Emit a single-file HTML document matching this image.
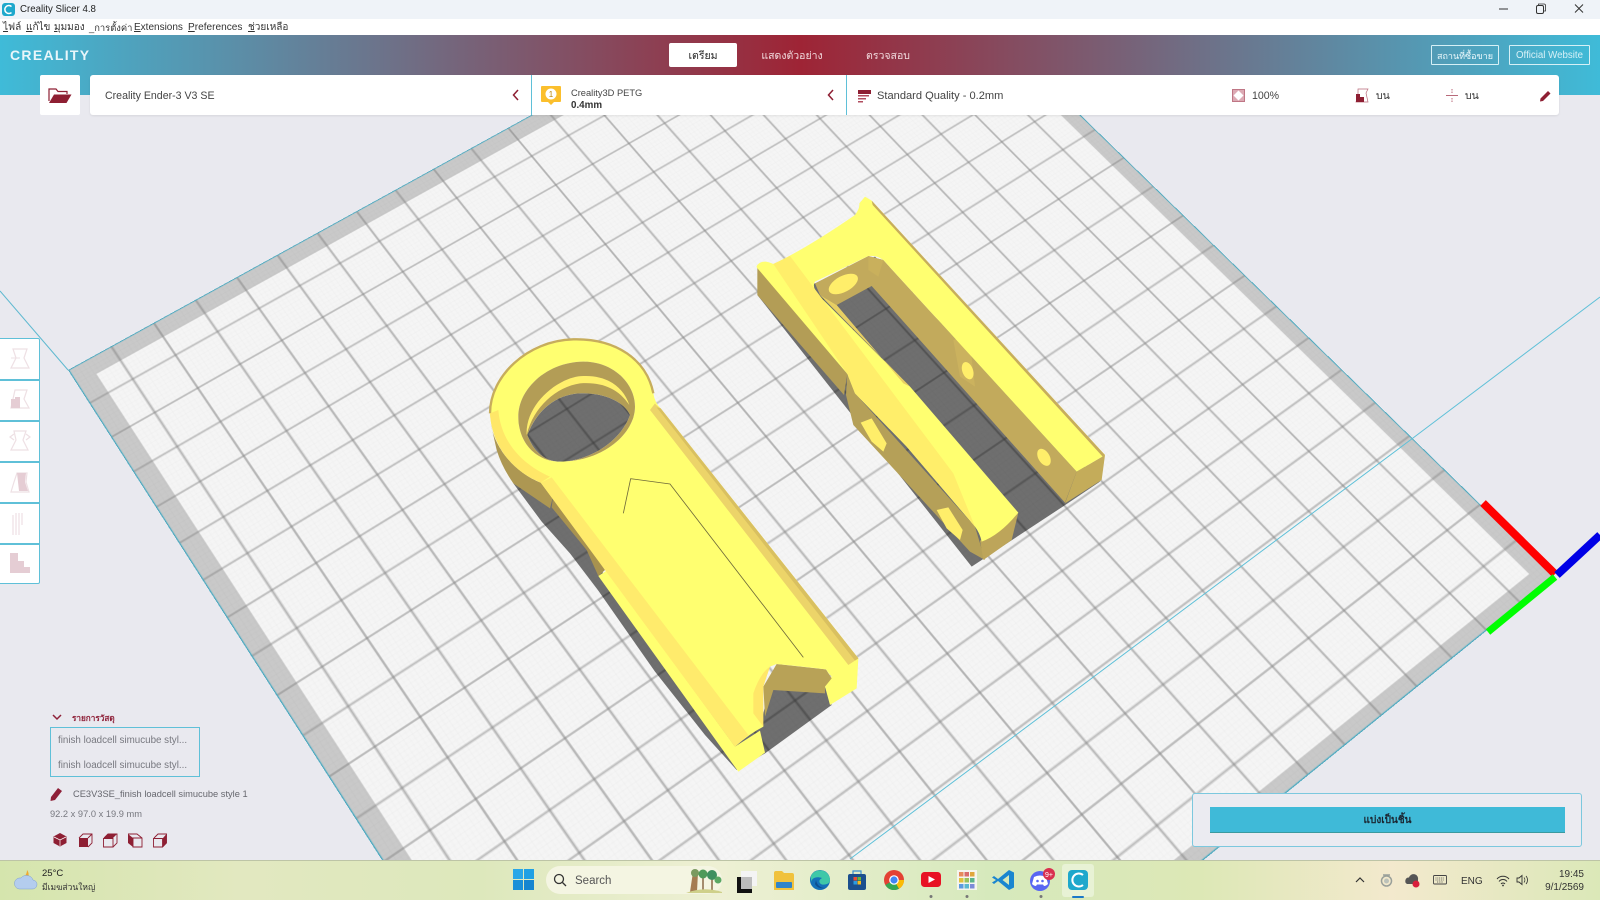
<!DOCTYPE html>
<html><head><meta charset="utf-8"><title>Creality Slicer 4.8</title>
<style>
html,body{margin:0;padding:0;width:1600px;height:900px;overflow:hidden;background:#e9e9ef}
body{position:relative;font-family:"Liberation Sans","Noto Sans CJK SC",sans-serif;color:#333}
.a{position:absolute}
.t{position:absolute;white-space:nowrap;line-height:14px}
#view{position:absolute;left:0;top:0;width:1600px;height:860px;overflow:hidden;background:#e9e9ef;contain:paint}
#plate{position:absolute;left:0;top:0;width:1000px;height:1000px;transform-origin:0 0;
transform:matrix3d(.9699,-.46195,0,.00017655,.4492,.6432,0,-.00021958,0,0,1,0,68,370,0,1)}
u{text-decoration:underline}
</style></head><body>
<div id="view">
<div id="plate"><svg width="1000" height="1000" viewBox="0 0 1000 1000" style="display:block">
<defs>
<pattern id="f" width="4.5454" height="4.5454" patternUnits="userSpaceOnUse"><path d="M0 0H4.5454M0 0V4.5454" stroke="#000" stroke-opacity=".035" stroke-width=".9" fill="none"/></pattern>
<pattern id="m" width="45.4545" height="45.4545" patternUnits="userSpaceOnUse" patternTransform="translate(-22.727,-22.727)"><path d="M22.727 0V45.4545M0 22.727H45.4545" stroke="#868686" stroke-width="1.150" fill="none"/></pattern>
</defs>
<rect width="1000" height="1000" fill="#c9c9c9"/>
<rect x="20" y="20" width="963" height="965" fill="#f5f5f5"/>
<rect width="1000" height="1000" fill="url(#f)"/>
<rect width="1000" height="1000" fill="url(#m)"/>
<rect x=".5" y=".5" width="999" height="999" fill="none" stroke="#4aa9c0" stroke-width="1.200"/>
</svg></div>
<svg class="a" style="left:0;top:0;display:block" width="1600" height="860" viewBox="0 0 1600 860">
<path d="M0 291L68 370" stroke="#5fb9d0" stroke-width="1" fill="none"/>
<path d="M1600 297L1413 438L850 859" stroke="#5fc0d8" stroke-width="1" fill="none"/>

<!-- model 1 -->
<g transform="translate(470,320) scale(.33333)">
<path d="M130 490L215 605L300 700L385 812L555 1055L705 1245L800 1350L885 1300L1085 1155L1065 1100L900 1100L870 1220L400 760L240 520Z" fill="#000" fill-opacity=".55"/>
<path d="M172 345C200 270 260 222 330 220C410 218 465 250 480 285C450 370 350 425 270 425C225 425 190 395 172 345Z" fill="#000" fill-opacity=".55"/>
<path d="M62 310C75 390 140 460 212 488L250 525L240 565L130 490Q95 440 80 390Z" fill="#ad9752"/>
<path d="M210 488L360 680L405 750L385 768L350 690L245 562L250 525Z" fill="#a8924f"/>
<path d="M385 768L410 752L795 1280L870 1232L885 1298L805 1355Z" fill="#ffff70"/>
<path d="M1085 1070L1165 1015L1160 1105L1080 1155L1065 1100Z" fill="#ffff70"/>
<path d="M880 1100L920 1032L1068 1048L1085 1075L1065 1100L1065 1120L910 1110L885 1190Z" fill="#b8a257"/>
<path fill-rule="evenodd" fill="#ffff70" d="M212 488C120 450 65 370 60 280C60 170 170 62 310 58C440 55 530 120 550 220Q555 250 572 265L1165 1015Q1120 1050 1085 1070Q1075 1060 1068 1048Q1000 1040 920 1032L900 1040Q880 1090 872 1130L880 1220Q840 1240 795 1280L410 752Z
M145 290C145 200 240 125 340 125C430 125 495 190 495 260C495 340 400 425 270 425C200 425 145 370 145 290Z"/>
<path fill-rule="evenodd" fill="#b39d56" d="M145 290C145 200 240 125 340 125C430 125 495 190 495 260C495 340 400 425 270 425C200 425 145 370 145 290Z
M172 345C200 270 260 222 330 220C410 218 465 250 480 285C450 370 350 425 270 425C225 425 190 395 172 345Z"/>
<path d="M170 345C165 250 270 168 340 168C410 165 460 200 478 255C445 205 395 185 330 190C260 200 190 260 170 345Z" fill="#fff06c"/>
<path d="M60 280C60 170 170 62 310 58C440 55 530 120 550 220" fill="none" stroke="#c7ad5c" stroke-width="7"/>
<path d="M212 488C120 450 65 370 60 280L85 270C92 360 150 430 240 470Z" fill="#ffe768"/>
<path d="M555 250Q560 258 572 265L1165 1015L1135 1035L540 270Z" fill="#ecd469"/>
<path d="M572 265L1165 1015L1155 1022L560 262Z" fill="#d9c060"/>
<path d="M212 488L245 472L835 1245L795 1280Z" fill="#ffeb6c"/>
<path d="M460 580L482 476L600 492L1000 1012" fill="none" stroke="#6f6a3a" stroke-width="2.500"/>
<path d="M850 1120Q870 1060 900 1040L880 1100L880 1220L850 1180Z" fill="#ffe768"/>
</g>

<!-- model 2 -->
<g transform="translate(740,180) scale(.33333)">
<path d="M52 345L695 1160L965 982L1080 905L405 230L225 310Z" fill="#000" fill-opacity=".55"/>
<path d="M52 262L52 345L312 645L322 582Z" fill="#b39d56"/>
<path d="M322 582L345 640L705 1040L735 1140L690 1115L340 735L318 645Z" fill="#b5a058"/>
<path d="M835 998L815 1080L730 1140L720 1082Q780 1065 835 998Z" fill="#bda55a"/>
<path d="M1095 825L1085 900L975 970L1010 875Z" fill="#c4ac5a"/>
<path d="M385 228L430 240L1010 875L975 968L395 318L290 375L240 345L225 310Z" fill="#c2aa5c"/>
<path d="M640 480Q665 470 690 490L705 620L660 590Z" fill="#cbb25e"/>
<path d="M50 258Q65 235 100 252Q200 205 345 105Q360 85 358 70L375 50L395 62L1095 825L1010 875L640 470L430 240Q410 225 385 228L225 305Q215 320 235 345L420 530L510 620L835 998Q780 1065 725 1085Q720 1060 705 1040L500 800L345 640L322 582L50 262Z" fill="#ffff70"/>
<path d="M100 252L150 228L640 880L705 1040L500 800L345 640L322 582Z" fill="#ffee6a"/>
<path d="M240 345L290 375L490 610L510 620Z" fill="#e8cf62"/>
<path d="M395 62L1095 825L1088 830L398 75Z" fill="#c7ad5c"/>
<path d="M385 228L430 240L415 290L385 270Z" fill="#c9b05c"/>
<ellipse cx="310" cy="312" rx="48" ry="24" transform="rotate(-28 310 312)" fill="#ffee6a"/>
<ellipse cx="683" cy="572" rx="16" ry="27" transform="rotate(-20 683 572)" fill="#ffee6a"/>
<ellipse cx="912" cy="832" rx="17" ry="28" transform="rotate(-30 912 832)" fill="#ffee6a"/>
<path d="M362 728L395 715L440 790L430 815L395 785Z" fill="#ffee6a"/>
<path d="M590 990L625 982L668 1050L660 1080L620 1045Z" fill="#ffee6a"/>
</g>

<!-- axes -->
<path d="M1483 503L1555 574" stroke="#ff0000" stroke-width="8"/>
<path d="M1488 632L1555 577" stroke="#00ff00" stroke-width="7"/>
<path d="M1557 575L1600 535" stroke="#0000e6" stroke-width="8"/>
</svg>
</div>

<!-- title bar -->
<div class="a" style="left:0;top:0;width:1600px;height:19px;background:#eff3f8"></div>
<div class="a" style="left:0;top:19px;width:1600px;height:16px;background:#fff"></div>
<div class="t" style="left:20px;top:3px;font-size:9.7px;color:#222">Creality Slicer 4.8</div>
<div class="t" style="left:3px;top:21px;font-size:10px"><u>ไ</u>ฟล์</div>
<div class="t" style="left:26px;top:21px;font-size:10px"><u>แ</u>ก้ไข</div>
<div class="t" style="left:54px;top:21px;font-size:10px"><u>ม</u>ุมมอง</div>
<div class="t" style="left:89px;top:21px;font-size:9.4px">_การตั้งค่า</div>
<div class="t" style="left:134px;top:21px;font-size:10px"><u>E</u>xtensions</div>
<div class="t" style="left:188px;top:21px;font-size:10.1px"><u>P</u>references</div>
<div class="t" style="left:248px;top:21px;font-size:10px"><u>ช</u>่วยเหลือ</div>

<!-- header -->
<div class="a" style="left:0;top:35px;width:1600px;height:60px;background:linear-gradient(90deg,#3fbbd8 0%,#9e2435 50%,#3fbbd8 100%)"></div>
<div class="t" style="left:10px;top:48px;font-size:14px;font-weight:bold;color:#e8f6fa;letter-spacing:1.3px">CREALITY</div>
<div class="a" style="left:669px;top:43px;width:68px;height:24px;background:#fff;border-radius:2px"></div>
<div class="t" style="left:669px;top:49px;width:68px;text-align:center;font-size:10.5px;color:#222">เตรียม</div>
<div class="t" style="left:742px;top:49px;width:100px;text-align:center;font-size:10.5px;color:#f3dde0">แสดงตัวอย่าง</div>
<div class="t" style="left:848px;top:49px;width:80px;text-align:center;font-size:10.5px;color:#f3dde0">ตรวจสอบ</div>
<div class="a" style="left:1431px;top:45px;width:66px;height:18px;border:1px solid #d6f0f6;border-radius:1px"></div>
<div class="t" style="left:1431px;top:49px;width:68px;text-align:center;font-size:9px;color:#eefafd">สถานที่ซื้อขาย</div>
<div class="a" style="left:1509px;top:45px;width:79px;height:18px;border:1px solid #d6f0f6;border-radius:1px"></div>
<div class="t" style="left:1509px;top:49px;width:81px;text-align:center;font-size:9.7px;color:#d8f1f7">Official Website</div>

<!-- toolbar -->
<div class="a" style="left:40px;top:75px;width:40px;height:40px;background:#fff;border-radius:2px"></div>
<div class="a" style="left:90px;top:75px;width:1469px;height:40px;background:#fff;border-radius:3px;box-shadow:0 1px 2px rgba(0,0,0,.08)"></div>
<div class="a" style="left:531px;top:75px;width:1px;height:40px;background:#5fc0d8"></div>
<div class="a" style="left:846px;top:75px;width:1px;height:40px;background:#5fc0d8"></div>
<div class="t" style="left:105px;top:89px;font-size:10.6px;color:#444">Creality Ender-3 V3 SE</div>
<div class="t" style="left:571px;top:85.500px;font-size:9.3px;color:#444">Creality3D PETG</div>
<div class="t" style="left:571px;top:98.500px;font-size:9.8px;font-weight:bold;color:#333">0.4mm</div>
<div class="t" style="left:877px;top:89px;font-size:11.1px;color:#444">Standard Quality - 0.2mm</div>
<div class="t" style="left:1252px;top:89px;font-size:10.6px;color:#444">100%</div>
<div class="t" style="left:1376px;top:89px;font-size:10.5px;color:#333">บน</div>
<div class="t" style="left:1465px;top:89px;font-size:10.5px;color:#333">บน</div>

<!-- left tools -->
<div class="a" style="left:0;top:338px;width:40px;height:246px;box-sizing:border-box;background:#fff;border:1.500px solid #5fc0d8;border-left:0;border-radius:0 2px 2px 0"></div>
<div class="a" style="left:0;top:379px;width:40px;height:1.500px;background:#5fc0d8"></div>
<div class="a" style="left:0;top:420px;width:40px;height:1.500px;background:#5fc0d8"></div>
<div class="a" style="left:0;top:461px;width:40px;height:1.500px;background:#5fc0d8"></div>
<div class="a" style="left:0;top:502px;width:40px;height:1.500px;background:#5fc0d8"></div>
<div class="a" style="left:0;top:543px;width:40px;height:1.500px;background:#5fc0d8"></div>

<!-- bottom left -->
<div class="t" style="left:72px;top:712px;font-size:8.2px;font-weight:bold;color:#8e2038">รายการวัสดุ</div>
<div class="a" style="left:50px;top:727px;width:148px;height:48px;border:1.500px solid #5fc0d8"></div>
<div class="t" style="left:58px;top:734px;font-size:9.8px;color:#77787f">finish loadcell simucube styl...</div>
<div class="t" style="left:58px;top:759px;font-size:9.8px;color:#77787f">finish loadcell simucube styl...</div>
<div class="t" style="left:73px;top:786.500px;font-size:9.3px;color:#66676e">CE3V3SE_finish loadcell simucube style 1</div>
<div class="t" style="left:50px;top:807px;font-size:9.3px;color:#77787f">92.2 x 97.0 x 19.9 mm</div>

<!-- slice -->
<div class="a" style="left:1192px;top:793px;width:388px;height:52px;background:#ebebf1;border:1.500px solid #7cc8de;border-radius:3px"></div>
<div class="a" style="left:1210px;top:807px;width:355px;height:25px;background:#3fbad8;border-bottom:1px solid #3b9a9f"></div>
<div class="t" style="left:1210px;top:814px;width:355px;text-align:center;font-size:10px;font-weight:bold;color:#1a2530">แบ่งเป็นชิ้น</div>

<!-- taskbar -->
<div class="a" style="left:0;top:860px;width:1600px;height:40px;background:linear-gradient(90deg,#d5e5ad 0%,#e2e8c0 15%,#dde8bc 30%,#eef0d4 45%,#d6e9bc 62%,#dde8b6 75%,#f3e9cd 87%,#dbe8b8 100%);border-top:1px solid #bdc4a6;box-sizing:border-box"></div>
<div class="t" style="left:42px;top:867px;font-size:9.5px;color:#222">25°C</div>
<div class="t" style="left:42px;top:880px;font-size:8.5px;color:#333">มีเมฆส่วนใหญ่</div>
<div class="a" style="left:546px;top:866px;width:176px;height:28px;border-radius:14px;background:#f4f5e2"></div>
<div class="t" style="left:575px;top:874px;font-size:11.5px;color:#555">Search</div>
<div class="t" style="left:1461px;top:875px;font-size:10px;color:#333">ENG</div>
<div class="t" style="left:1540px;top:868px;width:44px;text-align:right;font-size:10px;color:#333">19:45</div>
<div class="t" style="left:1524px;top:881px;width:60px;text-align:right;font-size:10px;color:#333">9/1/2569</div>

<!-- icons -->
<svg class="a" style="left:0;top:0;display:block" width="1600" height="900" viewBox="0 0 1600 900">
<rect x="2" y="3" width="13" height="13" rx="3" fill="#1ea8cc"/>
<path d="M11.500 6.500A4 4 0 1 0 11.500 12.500" fill="none" stroke="#fff" stroke-width="1.500"/>
<path d="M1499 9H1508" stroke="#333"/>
<rect x="1536.500" y="5.500" width="7" height="8" rx="1.500" fill="none" stroke="#333"/>
<path d="M1538.500 5V4H1544Q1545.500 4 1545.500 5.500V11H1544" fill="none" stroke="#333" stroke-width=".8"/>
<path d="M1575 4.500L1583 12.500M1583 4.500L1575 12.500" stroke="#333"/>
<!-- folder -->
<path d="M49 101V89H56L58 91.500H67V94" fill="none" stroke="#8e1f33" stroke-width="1.200"/>
<path d="M54 94.500H71.500L66.500 103H49Z" fill="#8e1f33"/>
<path d="M518 90L513.500 95L518 100M833 90L828.500 95L833 100" fill="none" stroke="#8e1f33" stroke-width="1.500"/>
<!-- material -->
<path d="M541 87Q541 86 542 86H560Q561 86 561 87V101Q561 102 560 102H554L551 105L548 102H542Q541 102 541 101Z" fill="#fbbf2d"/>
<circle cx="551" cy="94" r="5.500" fill="#fff"/>
<text x="551" y="97" text-anchor="middle" font-size="8" fill="#b8860b" font-family="Liberation Sans">1</text>
<!-- quality -->
<rect x="858" y="90" width="13" height="4" fill="#8e1f33"/>
<rect x="858" y="95" width="11" height="1.500" fill="#b04d5f"/>
<rect x="858" y="98" width="8" height="1.500" fill="#b04d5f"/>
<rect x="858" y="101" width="5" height="1.500" fill="#b04d5f"/>
<!-- infill -->
<rect x="1232" y="89" width="13" height="13" fill="#dcaab4"/>
<path d="M1238.500 90.500L1243.500 95.500L1238.500 100.500L1233.500 95.500Z" fill="#fff"/>
<rect x="1232.500" y="89.500" width="12" height="12" fill="none" stroke="#b86a7a" stroke-width=".8"/>
<!-- support -->
<path d="M1358 89H1368L1366 93L1368 102H1356L1358 95Z" fill="none" stroke="#b86a7a" stroke-width=".7"/>
<path d="M1356 94H1360V97H1364V102H1356Z" fill="#8e1f33"/>
<!-- adhesion -->
<path d="M1446 95.500H1458" stroke="#b86a7a"/>
<path d="M1452 89V93M1452 98V102" stroke="#b86a7a" stroke-dasharray="1.500 1"/>
<!-- pencil -->
<path d="M1540.500 98.500L1548 91L1550.500 93.500L1543 101L1540 101.500Z" fill="#8e1f33"/>

<!-- left tool icons -->
<g fill="none" stroke="#eee0e4" stroke-width="1.200">
<path d="M13 349H27L24 358L29 368H11L16 358Z"/>
<path d="M11 358H20" stroke-width="1"/>
<path d="M15 390H27L24 399L29 408H11Z"/>
<path d="M14 431H26L23 440L28 450H11L16 440Z"/>
<path d="M14 434L10 437L14 440M26 434L30 437L26 440"/>
<path d="M17 473H27L26 482L29 492H11L14 482Z"/>
<path d="M13 515V535M16 513V535M19 513V535M22 513V525"/>
</g>
<path d="M11 408V399H15V397H20V408Z" fill="#e5cdd4"/>
<path d="M17 473H26L25 482L28 491H19Z" fill="#e5cdd4"/>
<path d="M10 553H18V561H24V567H30V573H10Z" fill="#e5cdd4"/>

<!-- bottom left icons -->
<path d="M53 715L57 719L61 715" fill="none" stroke="#8e2038" stroke-width="1.500"/>
<path d="M51 797L58 788L62 791L55 800L50.500 801Z" fill="#8e2038"/>
<path d="M60 833L66.500 836.500V843L60 846.500L53.500 843V836.500Z" fill="#8e1f33"/>
<path d="M54 837L60 840L66 837M60 840V846" stroke="#fff" stroke-width=".7" fill="none"/>
<rect x="79" y="838" width="9" height="9" fill="#8e1f33"/>
<path d="M79 838L83 834H92V843L88 847M88 838L92 834" fill="none" stroke="#8e1f33" stroke-width=".9"/>
<path d="M103.500 838.500H113V847H103.500ZM104 838L108 834H117V843L113 847" fill="none" stroke="#8e1f33" stroke-width=".9"/>
<path d="M113 838L117 834H108L104 838Z" fill="#8e1f33"/>
<path d="M128 834L133 838V847L128 843Z" fill="#8e1f33"/>
<path d="M128 834H137L142 838V847H133V838H142" fill="none" stroke="#8e1f33" stroke-width=".9"/>
<path d="M153.500 838.500H162.500V847H153.500ZM154 838L158 834H166.500V843L162.500 847" fill="none" stroke="#8e1f33" stroke-width=".9"/>
<path d="M163 838L166.500 834V843L163 847Z" fill="#8e1f33"/>

<!-- weather -->
<path d="M16 879A7 7 0 0 0 27 870A9 9 0 0 1 16 879Z" fill="#f0a830"/>
<path d="M19 889H32A4.500 4.500 0 0 0 33 880A7 7 0 0 0 21 878A5.500 5.500 0 0 0 19 889Z" fill="#b4cdee" stroke="#7f9fd0" stroke-width=".5"/>

<!-- start -->
<rect x="513" y="869" width="10" height="10" fill="#29a7e8"/>
<rect x="524" y="869" width="10" height="10" fill="#1fa0e4"/>
<rect x="513" y="880" width="10" height="10" fill="#1a8fd8"/>
<rect x="524" y="880" width="10" height="10" fill="#1585d0"/>
<!-- search -->
<circle cx="559" cy="879" r="4.500" fill="none" stroke="#333" stroke-width="1.300"/>
<path d="M562.500 882.500L566 886" stroke="#333" stroke-width="1.300"/>
<path d="M690 892L693 872H698L697 892Z" fill="#a57c52"/>
<path d="M703 874V892M712 874V892" stroke="#8a6a48" stroke-width="1.500"/>
<circle cx="695" cy="873" r="4" fill="#7a9a60"/>
<circle cx="703" cy="874" r="4.500" fill="#4f9a5a"/>
<circle cx="712" cy="875" r="5" fill="#3f9060"/>
<circle cx="718" cy="880" r="3.500" fill="#5aa864"/>
<path d="M686 893Q704 886 722 892V893Z" fill="#cfd08a"/>
<!-- notes -->
<rect x="741" y="871" width="16" height="15" fill="#f4f4f4"/>
<rect x="737" y="877" width="15" height="16" fill="#111"/>
<rect x="741" y="877" width="11" height="12" fill="#bdbdbd"/>
<!-- explorer -->
<path d="M774 873Q774 871 776 871H782L784 873H792Q794 873 794 875V890H774Z" fill="#f0c23c"/>
<rect x="776" y="882" width="16" height="6" rx="1" fill="#2f84c8"/>
<!-- edge -->
<circle cx="820" cy="880" r="10" fill="#1570b8"/>
<path d="M811 876A10 10 0 0 1 830 880C830 884 825 885 822 884.500C819 883.500 818 880 822 878C816 876 812 878 811 882Z" fill="#3fc8a8"/>
<path d="M815 884C817 888 822 889 825 888C820 888 817 885 816 880Z" fill="#0f4f90"/>
<!-- store -->
<rect x="848" y="874" width="18" height="16" rx="2" fill="#1b4f8e"/>
<path d="M853 874V871H861V874" fill="none" stroke="#3a90d0" stroke-width="1.200"/>
<rect x="853.500" y="877" width="3.500" height="3.500" fill="#e94f35"/>
<rect x="857.500" y="877" width="3.500" height="3.500" fill="#6bb73a"/>
<rect x="853.500" y="881" width="3.500" height="3.500" fill="#2c9be0"/>
<rect x="857.500" y="881" width="3.500" height="3.500" fill="#f8b91d"/>
<!-- chrome -->
<circle cx="894" cy="880" r="10" fill="#e34133"/>
<path d="M894 880L885.300 885A10 10 0 0 0 899 888.700Z" fill="#35a853"/>
<path d="M894 880H904A10 10 0 0 1 899 888.700Z" fill="#fbbc05"/>
<circle cx="894" cy="880" r="4.800" fill="#fff"/>
<circle cx="894" cy="880" r="3.600" fill="#4285f4"/>
<!-- youtube -->
<rect x="921" y="872" width="20" height="15" rx="3.500" fill="#e81224"/>
<path d="M928.500 876L935 879.500L928.500 883Z" fill="#fff"/>
<circle cx="931" cy="896.500" r="1.500" fill="#777"/>
<!-- grid app -->
<rect x="957" y="870" width="20" height="20" fill="#f5f5ee"/>
<g>
<rect x="959" y="872" width="4.500" height="4.500" fill="#e68a5c"/><rect x="964.500" y="872" width="4.500" height="4.500" fill="#d86c6c"/><rect x="970" y="872" width="4.500" height="4.500" fill="#e0a63c"/>
<rect x="959" y="878" width="4.500" height="4.500" fill="#e0c23c"/><rect x="964.500" y="878" width="4.500" height="4.500" fill="#9ac25c"/><rect x="970" y="878" width="4.500" height="4.500" fill="#5cb48a"/>
<rect x="959" y="884" width="4.500" height="4.500" fill="#5c9ae0"/><rect x="964.500" y="884" width="4.500" height="4.500" fill="#5cb8d0"/><rect x="970" y="884" width="4.500" height="4.500" fill="#7c8ad8"/>
</g>
<circle cx="967" cy="896.500" r="1.500" fill="#777"/>
<!-- vscode -->
<path d="M1009 870L1014 872.500V887.500L1009 890L998 881L994 884L992 882.500L996 880L992 877.500L994 876L998 879ZM1009 875L1002.500 880L1009 885Z" fill="#1a86d0" fill-rule="evenodd"/>
<!-- discord -->
<circle cx="1040" cy="881" r="10" fill="#5865f2"/>
<path d="M1034 877Q1040 874 1046 877L1048 884Q1046 886 1044 886L1043 884.500H1037L1036 886Q1034 886 1032 884Z" fill="#fff"/>
<circle cx="1037.500" cy="881" r="1.300" fill="#5865f2"/><circle cx="1042.500" cy="881" r="1.300" fill="#5865f2"/>
<circle cx="1049" cy="874" r="6" fill="#d9304f"/>
<text x="1049" y="877" text-anchor="middle" font-size="7" fill="#fff" font-family="Liberation Sans">9+</text>
<circle cx="1041" cy="896.500" r="1.500" fill="#777"/>
<!-- creality -->
<rect x="1062" y="864" width="32" height="33" rx="3" fill="#fff" fill-opacity=".4"/>
<rect x="1068" y="870" width="20" height="20" rx="4" fill="#1ea8cc"/>
<path d="M1083 875A6.500 6.500 0 1 0 1083 885" fill="none" stroke="#fff" stroke-width="2"/>
<rect x="1072" y="896" width="12" height="2" rx="1" fill="#1a78c8"/>
<!-- tray -->
<path d="M1356 882L1360 878L1364 882" fill="none" stroke="#333" stroke-width="1.200"/>
<circle cx="1386.500" cy="881" r="5" fill="none" stroke="#9aa09a" stroke-width="1.500"/>
<circle cx="1386.500" cy="881" r="2.500" fill="#bcc2ba"/>
<path d="M1383 875H1390" stroke="#9aa09a" stroke-width="1.500"/>
<path d="M1407 884A3.500 3.500 0 0 1 1409 877.500A4.500 4.500 0 0 1 1418 880V884Z" fill="#555"/>
<circle cx="1416" cy="884" r="3.500" fill="#d81e3c"/>
<rect x="1433.500" y="875.500" width="13" height="8.500" rx="1" fill="none" stroke="#444" stroke-width=".9"/>
<path d="M1435.500 878H1444.500M1435.500 880H1444.500M1437 882H1443" stroke="#444" stroke-width=".8" stroke-dasharray="1 .8"/>
<path d="M1497 879A8 8 0 0 1 1509 879M1499 881.500A5 5 0 0 1 1507 881.500M1501 884A2.500 2.500 0 0 1 1505 884" fill="none" stroke="#333" stroke-width="1"/>
<circle cx="1503" cy="885.500" r=".9" fill="#333"/>
<path d="M1517 878H1519L1522 875.500V884.500L1519 882H1517Z" fill="none" stroke="#333" stroke-width=".9"/>
<path d="M1524 877.500A4 4 0 0 1 1524 882.500M1526 876A6 6 0 0 1 1526 884" fill="none" stroke="#333" stroke-width=".8"/>
</svg>
</body></html>
